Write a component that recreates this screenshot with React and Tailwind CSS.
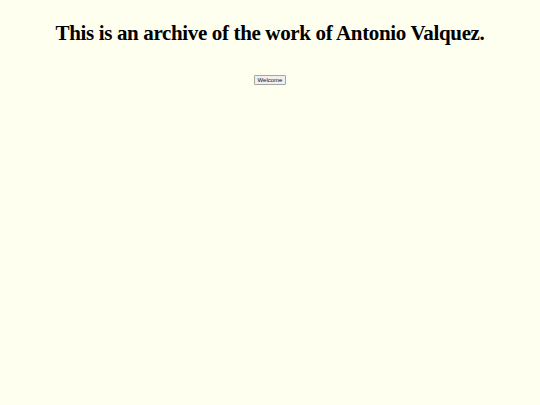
import React from 'react';

const App = () => {
    return (
        <div className="min-h-[405px] w-full bg-[#fffff0] pt-[20px] text-center">
            {/* Title */}
            <h1
                className="text-[21px] font-bold leading-[26px] tracking-[-0.35px] text-black"
                style={{ fontFamily: '"Liberation Serif", serif' }}
            >
                This is an archive of the work of Antonio Valquez.
            </h1>

            {/* Welcome button */}
            <div className="mt-[29px] flex justify-center">
                <button
                    type="button"
                    className="h-[10px] px-[3px] border border-[#a5a5a5] bg-[#f0f0f0] text-[6px] leading-[8px] text-[#111] rounded-[1px]"
                    style={{ fontFamily: '"Liberation Sans", sans-serif' }}
                >
                    Welcome
                </button>
            </div>
        </div>
    );
};

export default App;
